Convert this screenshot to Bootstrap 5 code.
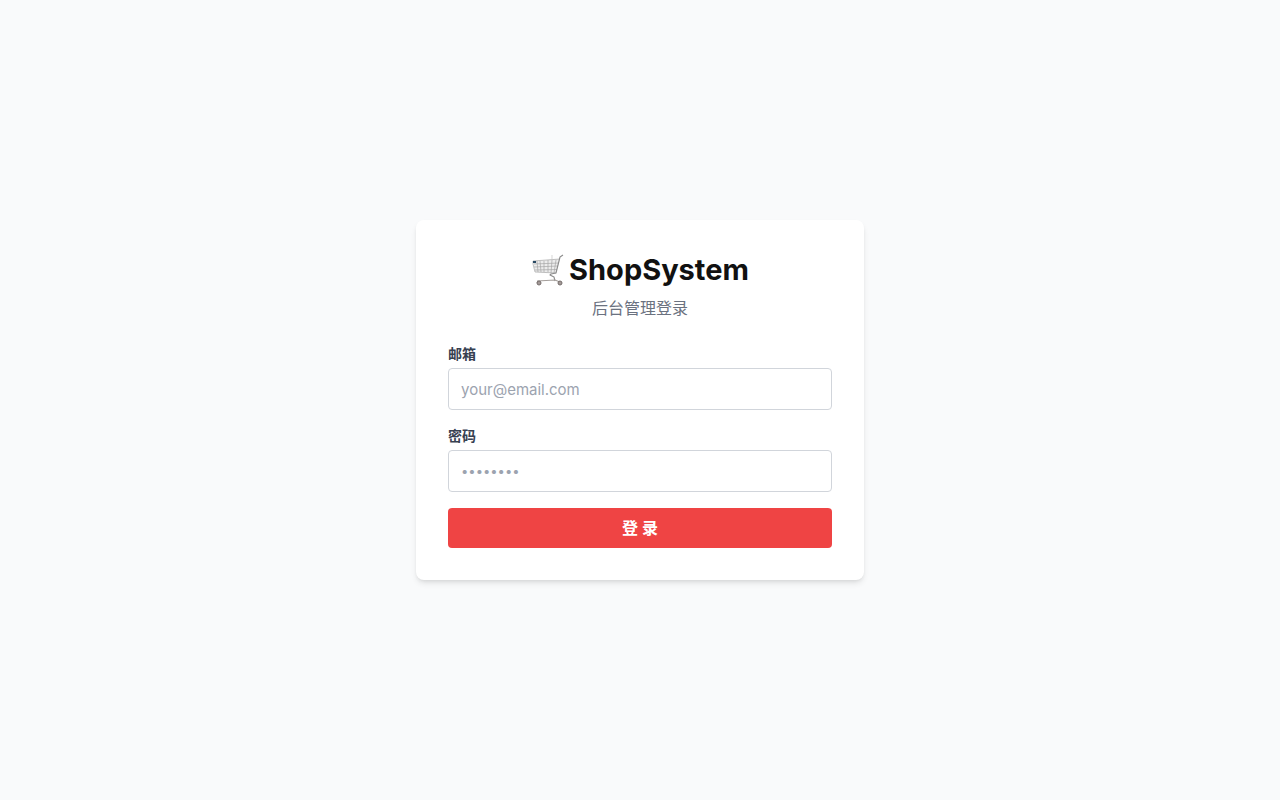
<!DOCTYPE html>
<html lang="zh-CN">
<head>
<meta charset="utf-8">
<meta name="viewport" content="width=device-width, initial-scale=1">
<title>ShopSystem 后台管理登录</title>
<link href="https://cdn.jsdelivr.net/npm/bootstrap@5.3.0/dist/css/bootstrap.min.css" rel="stylesheet">
<style>
  body { background: #f9fafb; font-family: Inter, "Noto Sans CJK SC", sans-serif; line-height: 24px; color: #111; }
  .login-card { max-width: 448px; border-radius: 8px; box-shadow: 0 4px 6px -1px rgba(0,0,0,.1), 0 2px 4px -2px rgba(0,0,0,.1); padding: 32px; }
  .brand { font-size: 29px; line-height: 36px; font-weight: 700; gap: 4px; }
  .brand svg { width: 34px; height: 34px; }
  .subtitle { color: #6b7280; }
  .form-label { font-size: 14px; line-height: 20px; font-weight: 600; color: #374151; }
  .form-control { height: 42px; padding: 8px 12px; border-color: #d1d5db; border-radius: 4px; font-size: 15px; line-height: 24px; }
  .form-control::placeholder { color: #9ca3af; }
  .form-control[type="password"] { font-size: 13px; }
  .btn-login { --bs-btn-bg: #ef4444; --bs-btn-color: #fff; --bs-btn-hover-bg: #dc2626; --bs-btn-hover-color: #fff; --bs-btn-active-bg: #dc2626; --bs-btn-active-color: #fff; height: 40px; padding: 8px 16px; border: 0; border-radius: 4px; font-weight: 700; line-height: 24px; }
</style>
</head>
<body class="min-vh-100 d-flex align-items-center justify-content-center">
<main class="login-card card border-0 w-100">
  <header class="text-center mb-4">
    <h1 class="brand d-flex align-items-center justify-content-center mb-2">
      <svg viewBox="0 0 34 34" fill="none" aria-hidden="true">
        <path d="M2 8 29 6l-4 14-21-1z" fill="#ececec"/>
        <path d="M2 8v3l2 8 21 1M2 8l27-2M3 11l25-1M3 14l24-1M4 17l22-.5M6 8l1 11M9 8l1 11M13 8v11M17 7v12M21 7l-1 13M25 7l-2 13" stroke="#a6a6a6" stroke-width=".7"/>
        <path d="M32 2l-3 2-4 16-5 1-1 1 4 2 1 4" stroke="#8c8c8c" stroke-width="1.1" stroke-linejoin="round"/>
        <path d="M6 28l18-1 5 2M7 28l-1 2" stroke="#a49e9b" stroke-width="1.1"/>
        <path d="M21 2v5" stroke="#c4c4c4" stroke-width=".7"/>
        <path d="M2 8h3v2H2z" fill="#294963"/>
        <circle cx="8" cy="30" r="2" fill="#a39997" stroke="#756d6b"/>
        <circle cx="29" cy="30" r="2" fill="#a39997" stroke="#756d6b"/>
      </svg>
      <span>ShopSystem</span>
    </h1>
    <p class="subtitle mb-0">后台管理登录</p>
  </header>
  <form>
    <div class="mb-3">
      <label class="form-label d-block mb-1" for="email">邮箱</label>
      <input class="form-control" type="email" id="email" placeholder="your@email.com">
    </div>
    <div class="mb-3">
      <label class="form-label d-block mb-1" for="password">密码</label>
      <input class="form-control" type="password" id="password" placeholder="••••••••">
    </div>
    <button class="btn btn-login w-100 d-block" type="submit">登 录</button>
  </form>
</main>
<script src="https://cdn.jsdelivr.net/npm/bootstrap@5.3.0/dist/js/bootstrap.bundle.min.js"></script>
</body>
</html>
